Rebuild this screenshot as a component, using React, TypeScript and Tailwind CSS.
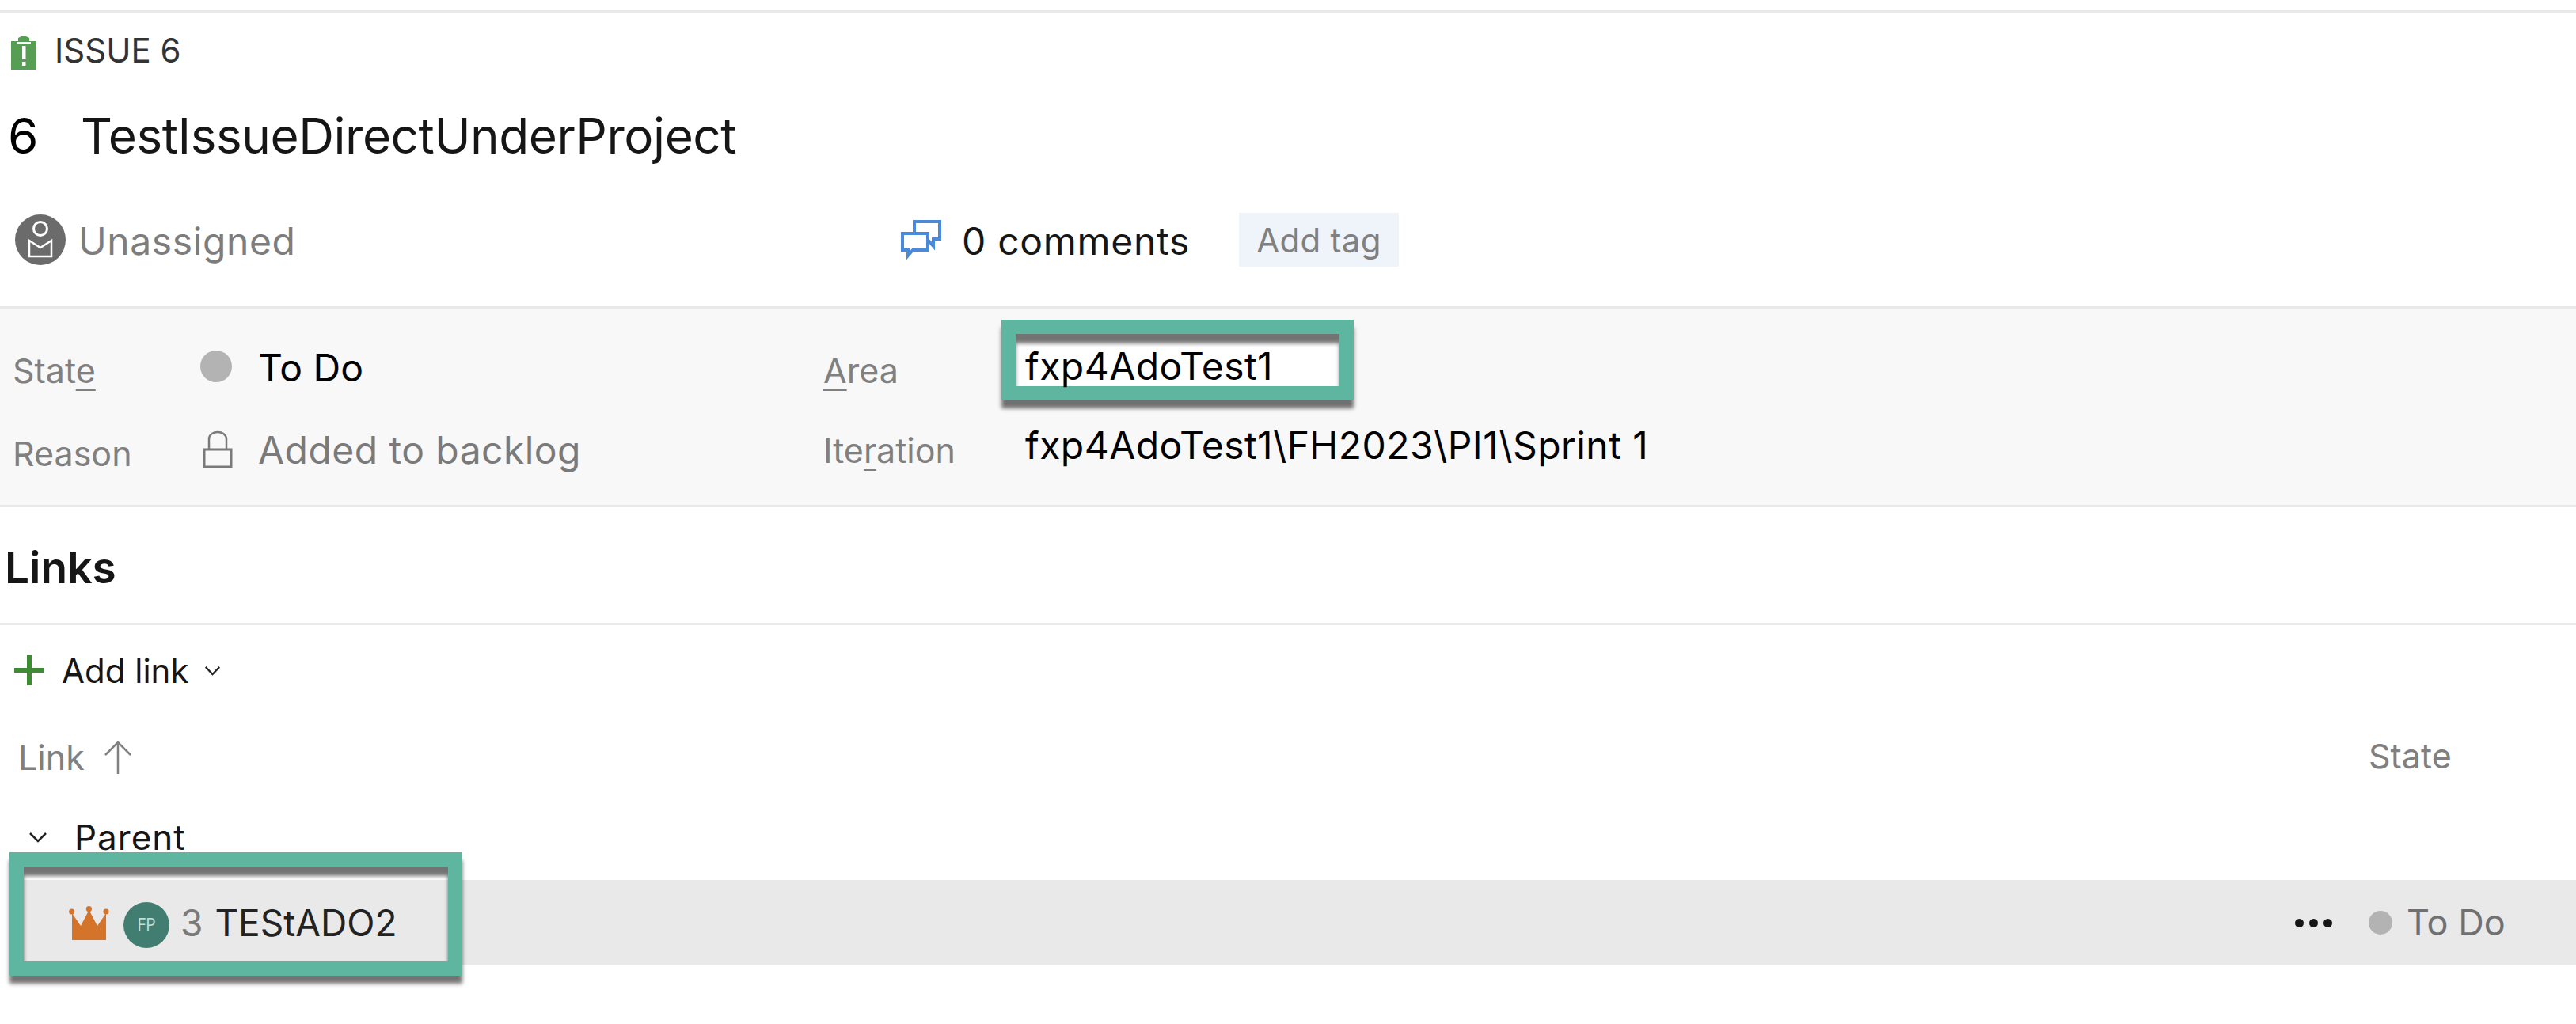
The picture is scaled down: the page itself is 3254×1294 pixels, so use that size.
import React from 'react';

const font = { fontFamily: 'Inter, "Noto Sans", sans-serif' };

const IssueIcon = () => (
  <svg width="32" height="43" viewBox="0 0 32 43" className="shrink-0">
    <path d="M0 7 H9 V3 Q16 -2 23 3 V7 H32 V43 H0 Z" fill="#559e53" />
    <rect x="7" y="8" width="18" height="2.5" fill="#fff" />
    <rect x="14" y="13" width="4.5" height="17" fill="#fff" />
    <rect x="14" y="33" width="4.5" height="5" fill="#fff" />
  </svg>
);

const UnassignedIcon = () => (
  <svg width="64" height="64" viewBox="0 0 64 64" className="shrink-0">
    <circle cx="32" cy="32" r="32" fill="#6b6b6b" />
    <circle cx="32" cy="18" r="8.5" fill="none" stroke="#fff" strokeWidth="3" />
    <path d="M18 33 L32 42 L46 33 V53 H18 Z" fill="none" stroke="#fff" strokeWidth="2.5" />
  </svg>
);

const CommentsIcon = () => (
  <svg width="51" height="50" viewBox="0 0 51 50" className="shrink-0" fill="none" stroke="#4a8ad8" strokeWidth="4">
    <path d="M2 17 H34 V38 H15 L9 45 V38 H2 Z" />
    <path d="M17 15 V2 H49 V24 H41 V33 L35 26" />
  </svg>
);

const LockIcon = () => (
  <svg width="38" height="48" viewBox="0 0 38 48" className="shrink-0" fill="none" stroke="#7a7a7a">
    <rect x="2" y="24" width="34" height="22" strokeWidth="3" />
    <path d="M8 24 V11 C8 -1 30 -1 30 11 V24" strokeWidth="2.5" />
  </svg>
);

const CrownIcon = () => (
  <svg width="51" height="43" viewBox="0 0 51 43" className="shrink-0" fill="#d4732a">
    <path d="M4 43 V9 L15 25 L25.5 5 L36 25 L47 9 V43 Z" />
    <circle cx="3.7" cy="7" r="3.6" />
    <circle cx="25.4" cy="3.6" r="3.6" />
    <circle cx="47" cy="7" r="3.6" />
  </svg>
);

const Chevron = ({ w, h, color }: { w: number; h: number; color: string }) => (
  <svg width={w} height={h} viewBox="0 0 24 14" preserveAspectRatio="none" className="shrink-0" fill="none" stroke={color} strokeWidth="2.5">
    <path d="M2 2 L12 12 L22 2" />
  </svg>
);

const Frame = ({ className }: { className: string }) => (
  <div
    className={`absolute border-[18px] border-[#5eb6a0] shadow-[0_10px_5px_rgba(0,0,0,0.55),inset_0_12px_5px_rgba(0,0,0,0.55)] ${className}`}
  />
);

export default function App() {
  return (
    <div className="w-[3254px] h-[1294px] bg-white overflow-hidden pt-[13px] text-[#161616]" style={font}>
      <div className="border-t-[3px] border-[#e9e9e9]" />

      {/* Header */}
      <div className="flex items-center gap-[23px] pl-[14px] mt-[29px] h-[43px]">
        <IssueIcon />
        <span className="-mt-[7px] text-[42px] leading-[43px] text-[#333333]">ISSUE 6</span>
      </div>
      <div className="flex pl-[10px] mt-[49px] h-[70px] text-[62px] leading-[70px] tracking-[-0.45px]">
        <span className="w-[92px] text-black">6</span>
        <span>TestIssueDirectUnderProject</span>
      </div>
      <div className="flex items-center h-[68px] mt-[62px] pl-[19px]">
        <div className="flex items-center gap-[16px] w-[1119px]">
          <UnassignedIcon />
          <span className="pt-[3px] text-[48px] tracking-[0.6px] text-[#7d7d7d]">Unassigned</span>
        </div>
        <div className="flex items-center gap-[26px] w-[427px]">
          <CommentsIcon />
          <span className="pt-[3px] text-[48px] tracking-[0.7px]">0 comments</span>
        </div>
        <div className="flex items-center justify-center w-[202px] h-[68px] bg-[#eff4fb] text-[42px] tracking-[0.3px] text-[#808080]">Add tag</div>
      </div>

      {/* Fields */}
      <div className="flex mt-[50px] h-[254px] bg-[#f8f8f8] border-y-[3px] border-[#e9e9e9] pl-[16px]">
        <div className="w-[1024px] pt-[45px] flex flex-col gap-[44px]">
          <div className="flex h-[60px] leading-[60px]">
            <span className="w-[237px] mt-[3px] text-[43px] text-[#808080]">
              Stat<span className="underline underline-offset-[8px] decoration-2">e</span>
            </span>
            <span className="w-[40px] h-[40px] mt-[8px] rounded-full bg-[#b3b3b3]" />
            <span className="ml-[33px] text-[48px] text-black">To Do</span>
          </div>
          <div className="flex h-[60px] leading-[60px]">
            <span className="w-[240px] mt-[4px] text-[43px] text-[#808080]">Reason</span>
            <span className="mt-[5px]">
              <LockIcon />
            </span>
            <span className="ml-[32px] text-[48px] tracking-[0.45px] text-[#7a7a7a]">Added to backlog</span>
          </div>
        </div>
        <div className="pt-[43px] flex flex-col gap-[40px]">
          <div className="flex h-[60px] leading-[60px]">
            <span className="w-[255px] mt-[5px] text-[43px] text-[#808080]">
              <span className="underline underline-offset-[8px] decoration-2">A</span>rea
            </span>
            <div className="relative text-[48px] tracking-[0.45px] text-black">
              <Frame className="-left-[30px] -top-[29px] w-[445px] h-[102px] bg-white" />
              <span className="relative">fxp4AdoTest1</span>
            </div>
          </div>
          <div className="flex h-[60px] leading-[60px]">
            <span className="w-[255px] mt-[6px] text-[43px] text-[#808080]">
              Ite<span className="underline underline-offset-[8px] decoration-2">r</span>ation
            </span>
            <span className="text-[48px] tracking-[0.45px] text-black">fxp4AdoTest1\FH2023\PI1\Sprint 1</span>
          </div>
        </div>
      </div>

      {/* Links */}
      <div className="mt-[41px] pl-[6px] h-[70px] text-[55px] leading-[70px] font-semibold">Links</div>
      <div className="mt-[35px] border-t-[3px] border-[#e9e9e9]" />
      <div className="flex items-center mt-[27px] h-[60px] pl-[18px]">
        <svg width="38" height="38" viewBox="0 0 38 38" className="shrink-0" fill="#3f8a35">
          <rect x="16" y="0" width="6" height="38" />
          <rect x="0" y="16" width="38" height="6" />
        </svg>
        <span className="ml-[22px] text-[42px]">Add link</span>
        <span className="ml-[20px]">
          <Chevron w={21} h={13} color="#222222" />
        </span>
      </div>
      <div className="flex mt-[50px] h-[60px] leading-[60px] text-[43px] text-[#808080]">
        <div className="flex items-center w-[2992px] pl-[23px]">
          <span>Link</span>
          <svg width="36" height="42" viewBox="0 0 36 42" className="shrink-0 ml-[24px]" fill="none" stroke="#808080" strokeWidth="2.5">
            <path d="M18 42 V2 M2 18 L18 2 L34 18" />
          </svg>
        </div>
        <span className="-mt-[2px]">State</span>
      </div>
      <div className="flex items-center mt-[41px] h-[60px] pl-[36px] text-[44px] tracking-[1px]">
        <Chevron w={24} h={14} color="#222222" />
        <span className="ml-[34px]">Parent</span>
      </div>

      {/* Parent row */}
      <div className="relative flex items-center mt-[24px] ml-[20px] h-[108px] bg-[#e9e9e9]">
        <Frame className="-left-[8px] -top-[35px] w-[572px] h-[156px]" />
        <div className="flex items-center w-[2879px] pl-[67px]">
          <CrownIcon />
          <span
            className="ml-[18px] flex items-center justify-center w-[58px] h-[58px] mt-[6px] rounded-full bg-[#417e71] text-[21px] text-[#c3dfd8]"
            style={{ fontFamily: '"Open Sans", sans-serif' }}
          >
            FP
          </span>
          <span className="ml-[14px] text-[46px] text-[#7a7a7a]">3</span>
          <span className="ml-[15px] text-[46px] text-[#222222]">TEStADO2</span>
        </div>
        <div className="flex items-center">
          <div className="flex gap-[7px]">
            <span className="w-[11px] h-[11px] rounded-full bg-[#161616]" />
            <span className="w-[11px] h-[11px] rounded-full bg-[#161616]" />
            <span className="w-[11px] h-[11px] rounded-full bg-[#161616]" />
          </div>
          <span className="ml-[46px] w-[30px] h-[30px] rounded-full bg-[#b3b3b3]" />
          <span className="ml-[18px] text-[45px] text-[#707070]">To Do</span>
        </div>
      </div>
    </div>
  );
}
